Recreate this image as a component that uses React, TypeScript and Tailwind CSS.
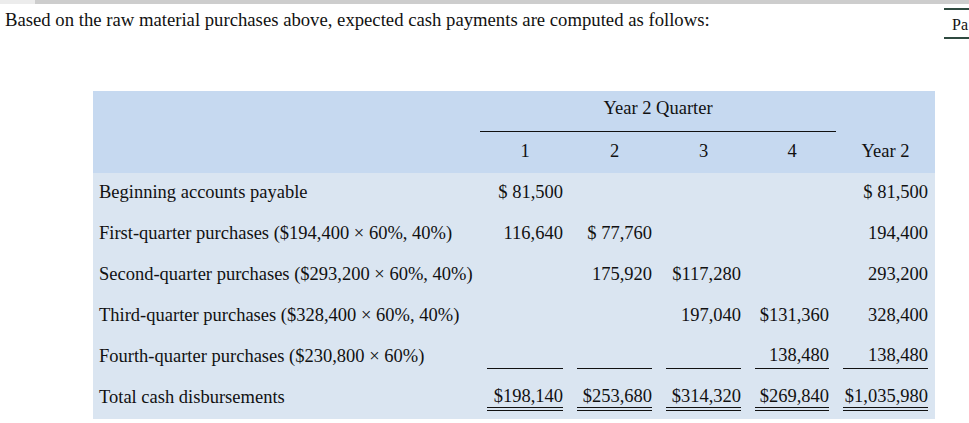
const rows: { label: string; cells: string[]; kind?: "single" | "double" }[] = [
  { label: "Beginning accounts payable", cells: ["$ 81,500", "", "", "", "$ 81,500"] },
  { label: "First-quarter purchases ($194,400 × 60%, 40%)", cells: ["116,640", "$ 77,760", "", "", "194,400"] },
  { label: "Second-quarter purchases ($293,200 × 60%, 40%)", cells: ["", "175,920", "$117,280", "", "293,200"] },
  { label: "Third-quarter purchases ($328,400 × 60%, 40%)", cells: ["", "", "197,040", "$131,360", "328,400"] },
  { label: "Fourth-quarter purchases ($230,800 × 60%)", cells: ["", "", "", "138,480", "138,480"], kind: "single" },
  { label: "Total cash disbursements", cells: ["$198,140", "$253,680", "$314,320", "$269,840", "$1,035,980"], kind: "double" },
];

export default function App() {
  return (
    <div className="relative w-[969px] h-[423px] bg-white overflow-hidden text-[#111] font-['Liberation_Serif','Times_New_Roman',serif]">
      {/* top scroll strip */}
      <div className="flex h-[4px]">
        <div className="w-[35px] bg-[#ececec]" />
        <div className="flex-1 bg-[#cdcdcd]" />
      </div>

      <p className="pl-[5px] pt-[5px] text-[18.7px] leading-[21px]">
        Based on the raw material purchases above, expected cash payments are computed as follows:
      </p>

      {/* side tab */}
      <div className="absolute left-[944px] top-[8px] h-[31px] w-[40px] border-y-2 border-[#2f4a40] bg-white pl-[8px] pt-[3px] text-[16px]">
        Pa
      </div>

      <table className="ml-[93px] mt-[61px] w-[842px] table-fixed border-collapse text-[18.5px]">
        <colgroup>
          <col className="w-[387px]" />
          <col className="w-[90px]" />
          <col className="w-[89px]" />
          <col className="w-[89px]" />
          <col className="w-[88px]" />
          <col className="w-[99px]" />
        </colgroup>
        <thead className="bg-[#c6d9f0]">
          <tr className="h-[40px]">
            <th />
            <th colSpan={4} className="border-b border-[#111] pb-[4px] text-center font-normal">
              Year 2 Quarter
            </th>
            <th />
          </tr>
          <tr className="h-[42px]">
            <th />
            <th className="px-[7px] text-center font-normal">1</th>
            <th className="px-[7px] text-center font-normal">2</th>
            <th className="px-[7px] text-center font-normal">3</th>
            <th className="px-[7px] text-center font-normal">4</th>
            <th className="px-[7px] text-center font-normal">Year 2</th>
          </tr>
        </thead>
        <tbody className="bg-[#dae5f1]">
          {rows.map((r) => (
            <tr key={r.label} className="h-[41px]">
              <td className="pl-[6px] pb-[2px] whitespace-nowrap">{r.label}</td>
              {r.cells.map((c, i) => (
                <td key={i} className="px-[7px] pb-[2px] text-right whitespace-nowrap">
                  {r.kind === "single" ? (
                    <div className="h-[25px] border-b border-[#111] leading-[22px]">{c}</div>
                  ) : r.kind === "double" ? (
                    <div className="h-[26px] border-b-[4px] border-double border-[#111] leading-[22px]">{c}</div>
                  ) : (
                    c
                  )}
                </td>
              ))}
            </tr>
          ))}
        </tbody>
      </table>
    </div>
  );
}
